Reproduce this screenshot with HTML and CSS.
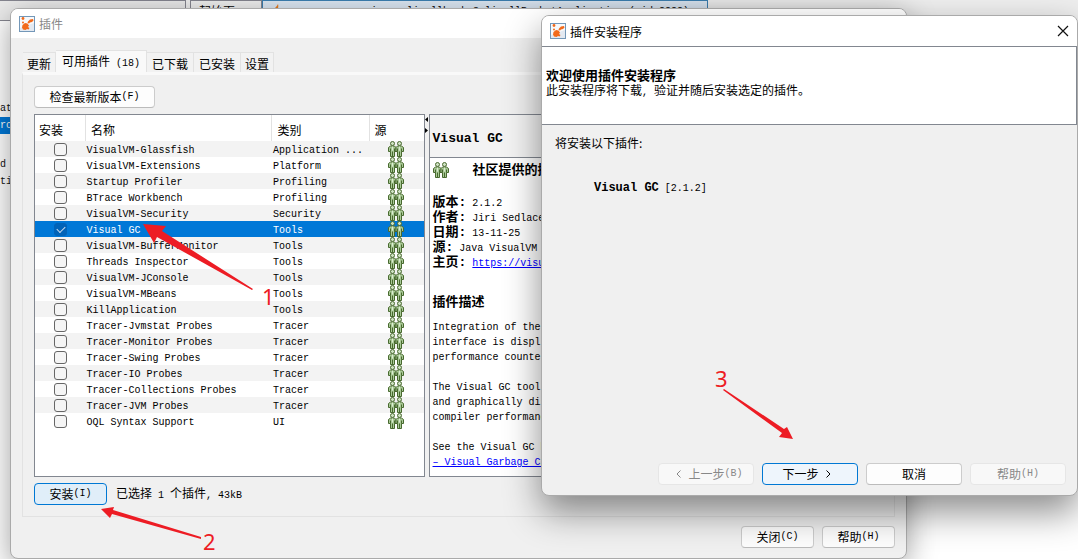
FILE: index.html
```
<!DOCTYPE html>
<html lang="zh-CN">
<head>
<meta charset="utf-8">
<title>插件</title>
<link rel="stylesheet" href="styles.css">
</head>
<body>
<svg class="defs" aria-hidden="true">
  <symbol id="people" viewBox="0 0 16 16">
    <g stroke="#48692f" fill="#a9c997" stroke-linejoin="round">
      <path d="M2.500 5h4L8 6.500v4H6.500v5H2.500v-5H.5v-4z"/>
      <path d="M9.500 5h4l2 1.500v4h-2v5h-4v-5H8v-4z"/>
      <circle cx="4.500" cy="2.500" r="2" fill="#cfe2c3"/>
      <circle cx="11.500" cy="2.500" r="2" fill="#cfe2c3"/>
      <path d="M4.500 10.500v5M11.500 10.500v5M2.500 7.500v3M6.500 7.500v3M9.500 7.500v3M13.500 7.500v3"/>
    </g>
    <path d="M4.500 5.500v4M11.500 5.500v4" stroke="#dcecd2"/>
  </symbol>
  <symbol id="logo" viewBox="0 0 16 16">
    <rect x=".5" y=".5" width="15" height="15" fill="#e3e9f1" stroke="#7397b8"/>
    <path d="M1 1h14v6L1 12z" fill="#fff" opacity=".7"/>
    <g fill="#f26a1b">
      <circle cx="4" cy="2.500" r="1.400"/>
      <circle cx="4" cy="6.500" r="1"/>
      <path d="M3.500 9 6 7l2.500.5 1.500 2-1 1.500 1.500 1-1 1.500-1.500-.5L6.500 14 4 13.500 3 11.500z"/>
      <path d="M9 5.500 11 3.500l3-.5.5 1.500L13 6l-2 .5L10 7.500 8.500 7z"/>
    </g>
  </symbol>
</svg>

<div class="desktop">
  <div class="ide-top">
    <div class="ide-bar"></div>
    <div class="ide-tab">起始页<span>✕</span></div>
    <div class="ide-tab ide-tab-on"><svg width="12" height="12" viewBox="0 0 12 12"><path d="M2 11C1 7 5 5 7 1c1 3-1 5 1 6 1 2-1 4-3 4z" fill="#e87b1c"/></svg><span class="ide-name">com.springs.alicallback.SelicellRocketApplication (pid 8888)</span><span>✕</span></div>
  </div>
  <div class="ide-code"><p>at</p><p class="on">ro</p><p></p><p>d</p><p>ti</p></div>

  <section class="window plugins">
    <header class="titlebar muted"><svg class="i16"><use href="#logo"/></svg>插件</header>
    <div class="plugins-body">
      <nav class="tabs">
        <button class="tab">更新</button>
        <button class="tab tab-on">可用插件<span class="en"> (18)</span></button>
        <button class="tab">已下载</button>
        <button class="tab">已安装</button>
        <button class="tab">设置</button>
      </nav>
      <div class="panel">
        <button class="btn check">检查最新版本<span class="en">(F)</span></button>
        <div class="split">
          <div class="list">
            <table>
              <colgroup><col class="c1"><col class="c2"><col class="c3"><col class="c4"></colgroup>
              <thead><tr><th>安装</th><th>名称</th><th>类别</th><th>源</th></tr></thead>
              <tbody>
                <tr><td><input type="checkbox" aria-label="VisualVM-Glassfish"></td><td>VisualVM-Glassfish</td><td>Application ...</td><td><svg class="i16"><use href="#people"/></svg></td></tr>
                <tr><td><input type="checkbox" aria-label="VisualVM-Extensions"></td><td>VisualVM-Extensions</td><td>Platform</td><td><svg class="i16"><use href="#people"/></svg></td></tr>
                <tr><td><input type="checkbox" aria-label="Startup Profiler"></td><td>Startup Profiler</td><td>Profiling</td><td><svg class="i16"><use href="#people"/></svg></td></tr>
                <tr><td><input type="checkbox" aria-label="BTrace Workbench"></td><td>BTrace Workbench</td><td>Profiling</td><td><svg class="i16"><use href="#people"/></svg></td></tr>
                <tr><td><input type="checkbox" aria-label="VisualVM-Security"></td><td>VisualVM-Security</td><td>Security</td><td><svg class="i16"><use href="#people"/></svg></td></tr>
                <tr class="selected"><td><input type="checkbox" checked aria-label="Visual GC"></td><td>Visual GC</td><td>Tools</td><td><svg class="i16"><use href="#people"/></svg></td></tr>
                <tr><td><input type="checkbox" aria-label="VisualVM-BufferMonitor"></td><td>VisualVM-BufferMonitor</td><td>Tools</td><td><svg class="i16"><use href="#people"/></svg></td></tr>
                <tr><td><input type="checkbox" aria-label="Threads Inspector"></td><td>Threads Inspector</td><td>Tools</td><td><svg class="i16"><use href="#people"/></svg></td></tr>
                <tr><td><input type="checkbox" aria-label="VisualVM-JConsole"></td><td>VisualVM-JConsole</td><td>Tools</td><td><svg class="i16"><use href="#people"/></svg></td></tr>
                <tr><td><input type="checkbox" aria-label="VisualVM-MBeans"></td><td>VisualVM-MBeans</td><td>Tools</td><td><svg class="i16"><use href="#people"/></svg></td></tr>
                <tr><td><input type="checkbox" aria-label="KillApplication"></td><td>KillApplication</td><td>Tools</td><td><svg class="i16"><use href="#people"/></svg></td></tr>
                <tr><td><input type="checkbox" aria-label="Tracer-Jvmstat Probes"></td><td>Tracer-Jvmstat Probes</td><td>Tracer</td><td><svg class="i16"><use href="#people"/></svg></td></tr>
                <tr><td><input type="checkbox" aria-label="Tracer-Monitor Probes"></td><td>Tracer-Monitor Probes</td><td>Tracer</td><td><svg class="i16"><use href="#people"/></svg></td></tr>
                <tr><td><input type="checkbox" aria-label="Tracer-Swing Probes"></td><td>Tracer-Swing Probes</td><td>Tracer</td><td><svg class="i16"><use href="#people"/></svg></td></tr>
                <tr><td><input type="checkbox" aria-label="Tracer-IO Probes"></td><td>Tracer-IO Probes</td><td>Tracer</td><td><svg class="i16"><use href="#people"/></svg></td></tr>
                <tr><td><input type="checkbox" aria-label="Tracer-Collections Probes"></td><td>Tracer-Collections Probes</td><td>Tracer</td><td><svg class="i16"><use href="#people"/></svg></td></tr>
                <tr><td><input type="checkbox" aria-label="Tracer-JVM Probes"></td><td>Tracer-JVM Probes</td><td>Tracer</td><td><svg class="i16"><use href="#people"/></svg></td></tr>
                <tr><td><input type="checkbox" aria-label="OQL Syntax Support"></td><td>OQL Syntax Support</td><td>UI</td><td><svg class="i16"><use href="#people"/></svg></td></tr>
              </tbody>
            </table>
          </div>
          <div class="divider"><svg width="4" height="20" viewBox="0 0 4 20"><path d="M3 3v5L0 5.500zM0 14v5l3-2.500z"/></svg></div>
          <article class="detail">
            <h2>Visual GC</h2>
            <div class="detail-body">
              <div class="community"><svg class="i16"><use href="#people"/></svg><b>社区提供的插件</b></div>
              <p><b>版本:</b>2.1.2</p>
              <p><b>作者:</b>Jiri Sedlacek</p>
              <p><b>日期:</b>13-11-25</p>
              <p><b>源:</b>Java VisualVM</p>
              <p><b>主页:</b><a href="#">https://visualvm</a></p>
              <h3>插件描述</h3>
              <p>Integration of the</p><p>interface is displ</p><p>performance counter</p>
              <p class="gap">The Visual GC tool</p><p>and graphically dis</p><p>compiler performanc</p>
              <p class="gap">See the Visual GC h</p><p><a href="#">– Visual Garbage Co</a></p>
            </div>
          </article>
        </div>
        <div class="install"><button class="btn w73 primary">安装<span class="en">(I)</span></button><span>已选择<span class="en"> 1 </span>个插件<span class="en">, 43kB</span></span></div>
      </div>
      <footer class="plugins-foot"><button class="btn w73">关闭<span class="en">(C)</span></button><button class="btn w73">帮助<span class="en">(H)</span></button></footer>
    </div>
  </section>

  <section class="window installer">
    <header class="titlebar"><svg class="i16"><use href="#logo"/></svg>插件安装程序<button class="close" aria-label="关闭"><svg width="12" height="12" viewBox="0 0 12 12"><path d="M1 1l10 10M11 1 1 11" stroke="#111" stroke-width="1.200"/></svg></button></header>
    <div class="banner"><h1>欢迎使用插件安装程序</h1><p>此安装程序将下载<span class="en">, </span>验证并随后安装选定的插件。</p></div>
    <div class="wizard">
      <p>将安装以下插件:</p>
      <p class="item"><b>Visual GC</b> [2.1.2]</p>
    </div>
    <footer class="wizard-foot">
      <button class="btn" disabled><svg class="chev" viewBox="0 0 5 8"><path d="M4.500.5 1 4l3.500 3.500"/></svg>上一步<span class="en">(B)</span></button>
      <button class="btn primary soft">下一步<svg class="chev" viewBox="0 0 5 8"><path d="M.5.5 4 4 .5 7.500"/></svg></button>
      <button class="btn">取消</button>
      <button class="btn" disabled>帮助<span class="en">(H)</span></button>
    </footer>
  </section>

  <svg class="notes" width="1078" height="559" viewBox="0 0 1078 559">
    <path d="M143 224 166 226 162 231 253 289 252 290 157 237 154 243z"/>
    <path d="M101 509 114 507 113 510 201 537 201 539 112 514 110 518z"/>
    <path d="M793 439 787 427 784 429 724 389 723 390 782 433 779 437z"/>
    <text x="262" y="305">1</text><text x="203" y="550">2</text><text x="715" y="387">3</text>
  </svg>
</div>
</body>
</html>
```
FILE: styles.css
```
* { box-sizing: border-box; }
body { margin: 0; font: 12px/15px "Noto Sans CJK SC", sans-serif; color: #000; }
h1, h2, h3, p { margin: 0; }
button { font: inherit; color: inherit; padding: 0; }
svg { display: block; flex: none; }
.defs { position: absolute; width: 0; height: 0; }
.i16 { width: 16px; height: 16px; }
.en { font-family: "Liberation Mono", monospace; font-size: 10px; white-space: pre; }

.desktop { position: relative; min-height: 100vh; overflow: hidden; background: #fff; }
.ide-top { display: flex; height: 21px; background: #eee; gap: 4px; width: 100%; }
.ide-bar { width: 186px; background: #eaeaea; border: 1px solid #85858f; border-left: 0; }
.ide-tab { display: flex; justify-content: space-between; align-items: flex-start; gap: 8px; width: 72px; padding: 2px 4px 0 8px; border: 1px solid #85858f; }
.ide-tab-on { width: 446px; margin-left: -4px; background: #dce8f4; border-color: #3c7fb1; font: 10px/18px "Liberation Mono", monospace; white-space: pre; }
.ide-name { flex: 1; text-align: right; }
.ide-code { width: 12px; padding-top: 79px; font: 10px/17px "Liberation Mono", monospace; white-space: nowrap; }
.ide-code p { height: 17px; color: #111; }
.ide-code p:nth-child(3) { height: 22px; }
.ide-code .on { background: #0078d7; color: #fff; }

.window { position: absolute; display: flex; flex-direction: column; background: #f0f0f0; border: 1px solid #aaa; border-radius: 8px; overflow: hidden; }
.plugins { left: 10px; right: 171px; top: 8px; bottom: 0; box-shadow: 0 8px 30px rgba(0,0,0,.38); }
.installer { left: 541px; right: 0; top: 15px; bottom: 63px; box-shadow: 0 16px 36px rgba(0,0,0,.45); }
.titlebar { display: flex; align-items: center; gap: 4px; height: 30px; padding: 0 8px; background: #fff; flex: none; }
.plugins .titlebar { height: 29px; }
.muted { color: #888; }
.close { margin-left: auto; border: 0; background: none; }

.plugins-body { flex: 1; display: flex; flex-direction: column; padding: 12px 11px 10px; }
.tabs { display: flex; align-items: flex-end; padding-left: 1px; height: 22px; flex: none; }
.tab { height: 20px; padding: 1px 4px 0 4px; border: 1px solid #e2e2e2; border-bottom: 0; border-left-width: 0; background: #f2f2f2; white-space: nowrap; min-width: 47px; }
.tab:first-child, .tab:last-child { min-width: 33px; }
.tab-on { height: 22px; min-width: 91px; padding: 0 4px; background: #f9f9f9; }
.panel { flex: 1; display: flex; flex-direction: column; border: 1px solid #e2e2e2; border-top: 3px solid #f9f9f9; padding: 11px; min-height: 0; }
.btn { height: 22px; padding-bottom: 1px; border: 1px solid #ccc; border-bottom-color: #bbb; border-radius: 4px; background: #fdfdfd; display: flex; align-items: center; justify-content: center; }
.btn:disabled { color: #888; background: #f8f8f8; border-color: #e6e6e6; }
.w73 { width: 73px; }
.primary { background: #e0eef9; border-color: #0078d4; }
.soft { background: #eef5fc; }
.check { width: 121px; align-self: flex-start; }
.split { display: flex; flex: 1; margin: 6px 0; min-height: 0; }
.list { flex: 0 0 46%; border: 1px solid #828790; background: #fff; overflow: hidden; }
table { width: 100%; table-layout: fixed; border-collapse: collapse; }
.c1 { width: 13%; } .c2 { width: 48%; } .c3 { width: 25%; } .c4 { width: 14%; }
th { height: 26px; padding: 2px 4px 0; text-align: left; font-weight: 400; border-right: 1px solid #e2e2e2; }
th + th { padding-left: 5px; }
th:last-child { border-right: 0; }
td { height: 16px; padding: 0 1px; font: 10px/12px "Liberation Mono", monospace; white-space: nowrap; overflow: hidden; }
td:nth-child(2), td:nth-child(3) { padding-top: 4px; }
td .i16, td input { margin: 0 auto; }
tbody tr:nth-child(odd) { background: #f3f3f3; }
tbody .selected { background: #0078d7; color: #fff; }
td input { display: block; appearance: none; width: 13px; height: 13px; border: 1px solid #666; border-radius: 3px; background: #f5f5f5; }
td input:checked { border-color: #0063b8; background: #0063b8; }
td input:checked::after { content: ""; display: block; width: 7px; height: 4px; margin: 2px; border: solid #cde; border-width: 0 0 1px 1px; transform: rotate(-45deg); }
.divider { width: 4px; }
.detail { flex: 1; min-width: 0; border: 1px solid #828790; background: #fff; overflow: hidden; font: 10px/15px "Liberation Mono", "Noto Sans CJK SC", monospace; white-space: nowrap; }
.detail h2 { height: 43px; padding: 16px 3px 0; font-size: 13px; line-height: 16px; background: #f3f3f3; border-bottom: 1px solid #828790; }
.detail-body { padding: 4px 3px; }
.detail p { height: 15px; }
.detail b { font-size: 13px; margin-right: 6px; }
.detail h3 { font-size: 13px; padding: 25px 0 10px; }
.detail .gap { height: 30px; padding-top: 15px; }
.detail a { color: #00f; }
.community { display: flex; gap: 24px; padding-bottom: 17px; }
.community b { padding-top: 1px; }
.install { display: flex; align-items: center; gap: 9px; }
.plugins-foot { display: flex; justify-content: flex-end; gap: 8px; padding-top: 9px; }

.banner { height: 79px; flex: none; padding: 20px 4px 0; background: #fff; border: 1px solid #828790; border-left: 0; }
.banner h1 { font-size: 13px; line-height: 15px; }
.wizard { flex: 1; padding: 10px 13px; }
.item { padding: 31px 39px; font: 10px/15px "Liberation Mono", monospace; }
.item b { font-size: 12px; }
.wizard-foot { display: flex; justify-content: flex-end; gap: 8px; padding: 0 11px 10px; }
.wizard-foot .btn { width: 96px; }
.chev { width: 5px; height: 8px; margin: 0 7px; fill: none; stroke: currentColor; }

.notes { position: absolute; left: 0; top: 0; pointer-events: none; fill: #ed1c24; font: 22px "Noto Sans", sans-serif; }
```
